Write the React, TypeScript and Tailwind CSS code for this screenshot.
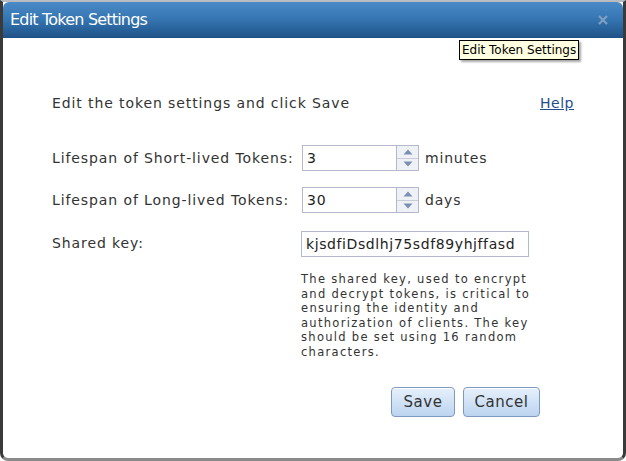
import React from 'react';

const font = { fontFamily: '"DejaVu Sans", Verdana, sans-serif' };

const Spinner: React.FC = () => (
  <div className="flex h-[26px] w-[22px] flex-col border border-l-0 border-[#b5b8c8] bg-[#eef1f6]">
    <div className="flex flex-1 items-center justify-center border-b border-[#c9ccd8]">
      <svg width="10" height="6" viewBox="0 0 10 6">
        <path d="M5 0.5 L9.5 5.5 L0.5 5.5 Z" fill="#7b8fb4" />
      </svg>
    </div>
    <div className="flex flex-1 items-center justify-center">
      <svg width="10" height="6" viewBox="0 0 10 6">
        <path d="M0.5 0.5 L9.5 0.5 L5 5.5 Z" fill="#7b8fb4" />
      </svg>
    </div>
  </div>
);

const NumberField: React.FC<{ value: string; unit: string }> = ({ value, unit }) => (
  <div className="flex items-center">
    <div className="flex h-[26px] w-[95px] items-center border border-[#b5b8c8] bg-white px-[4px] text-[14px] tracking-[0.8px] text-[#222]">
      {value}
    </div>
    <Spinner />
    <span className="ml-[6px] text-[14px] tracking-[0.8px] text-[#333]">{unit}</span>
  </div>
);

const helpLines = [
  'The shared key, used to encrypt',
  'and decrypt tokens, is critical to',
  'ensuring the identity and',
  'authorization of clients. The key',
  'should be set using 16 random',
  'characters.',
];

export default function App() {
  return (
    <div className="h-[461px] w-[626px] bg-white" style={font}>
      <div className="relative flex h-[461px] flex-col overflow-hidden rounded-b-[8px] border-x-[3px] border-b-[3px] border-t-[2px] border-x-[#3a3a3a] border-b-[#8a8a8a] border-t-[#b8bcc2] bg-white">
        {/* Title bar */}
        <div className="flex h-[36px] shrink-0 items-center justify-between rounded-t-[6px] bg-gradient-to-b from-[#4a8ac6] via-[#3474b0] to-[#1e5287] pl-[7px] pr-[14px]">
          <span className="text-[16px] tracking-[-0.8px] text-white">Edit Token Settings</span>
          <svg width="12" height="12" viewBox="0 0 12 12">
            <path d="M2 2 L10 10 M10 2 L2 10" stroke="#7f9fc2" strokeWidth="2.2" />
          </svg>
        </div>

        {/* Tooltip */}
        <div className="absolute left-[456px] top-[38px] border border-black bg-[#ffffe1] px-[2px] text-[12px] leading-[18px] text-black shadow-[2px_2px_2px_rgba(0,0,0,0.35)]">
          Edit Token Settings
        </div>

        {/* Body */}
        <div className="flex flex-1 flex-col pl-[49px] pr-[49px] pt-[55px] text-[14px] tracking-[0.9px] text-[#333]">
          <div className="flex items-center justify-between">
            <span>Edit the token settings and click Save</span>
            <a className="tracking-[0.5px] text-[#1f4e8c] underline">Help</a>
          </div>

          <div className="mt-[31px] flex items-center">
            <span className="w-[250px]">Lifespan of Short-lived Tokens:</span>
            <NumberField value="3" unit="minutes" />
          </div>

          <div className="mt-[16px] flex items-center">
            <span className="w-[250px]">Lifespan of Long-lived Tokens:</span>
            <NumberField value="30" unit="days" />
          </div>

          <div className="mt-[18px] flex items-start">
            <span className="mt-[2px] w-[249px]">Shared key:</span>
            <div className="flex flex-col">
              <div className="flex h-[26px] w-[228px] items-center border border-[#b5b8c8] bg-white px-[4px] tracking-[0.6px] text-[#222]">
                kjsdfiDsdlhj75sdf89yhjffasd
              </div>
              <p className="mt-[15px] whitespace-nowrap text-[11.5px] leading-[14.5px] tracking-[1.3px] text-[#333]">
                {helpLines.map((l) => (
                  <span key={l} className="block">{l}</span>
                ))}
              </p>
            </div>
          </div>

          <div className="mt-[28px] flex justify-end gap-[8px] pr-[34px]">
            <button className="h-[30px] w-[64px] rounded-[4px] border border-[#7d99c2] bg-gradient-to-b from-[#e6f0fb] to-[#bcd4f0] text-[15px] tracking-[0.5px] text-[#333] shadow-[inset_0_1px_0_#fff]">
              Save
            </button>
            <button className="h-[30px] w-[77px] rounded-[4px] border border-[#7d99c2] bg-gradient-to-b from-[#e6f0fb] to-[#bcd4f0] text-[15px] tracking-[0.5px] text-[#333] shadow-[inset_0_1px_0_#fff]">
              Cancel
            </button>
          </div>
        </div>
      </div>
    </div>
  );
}
